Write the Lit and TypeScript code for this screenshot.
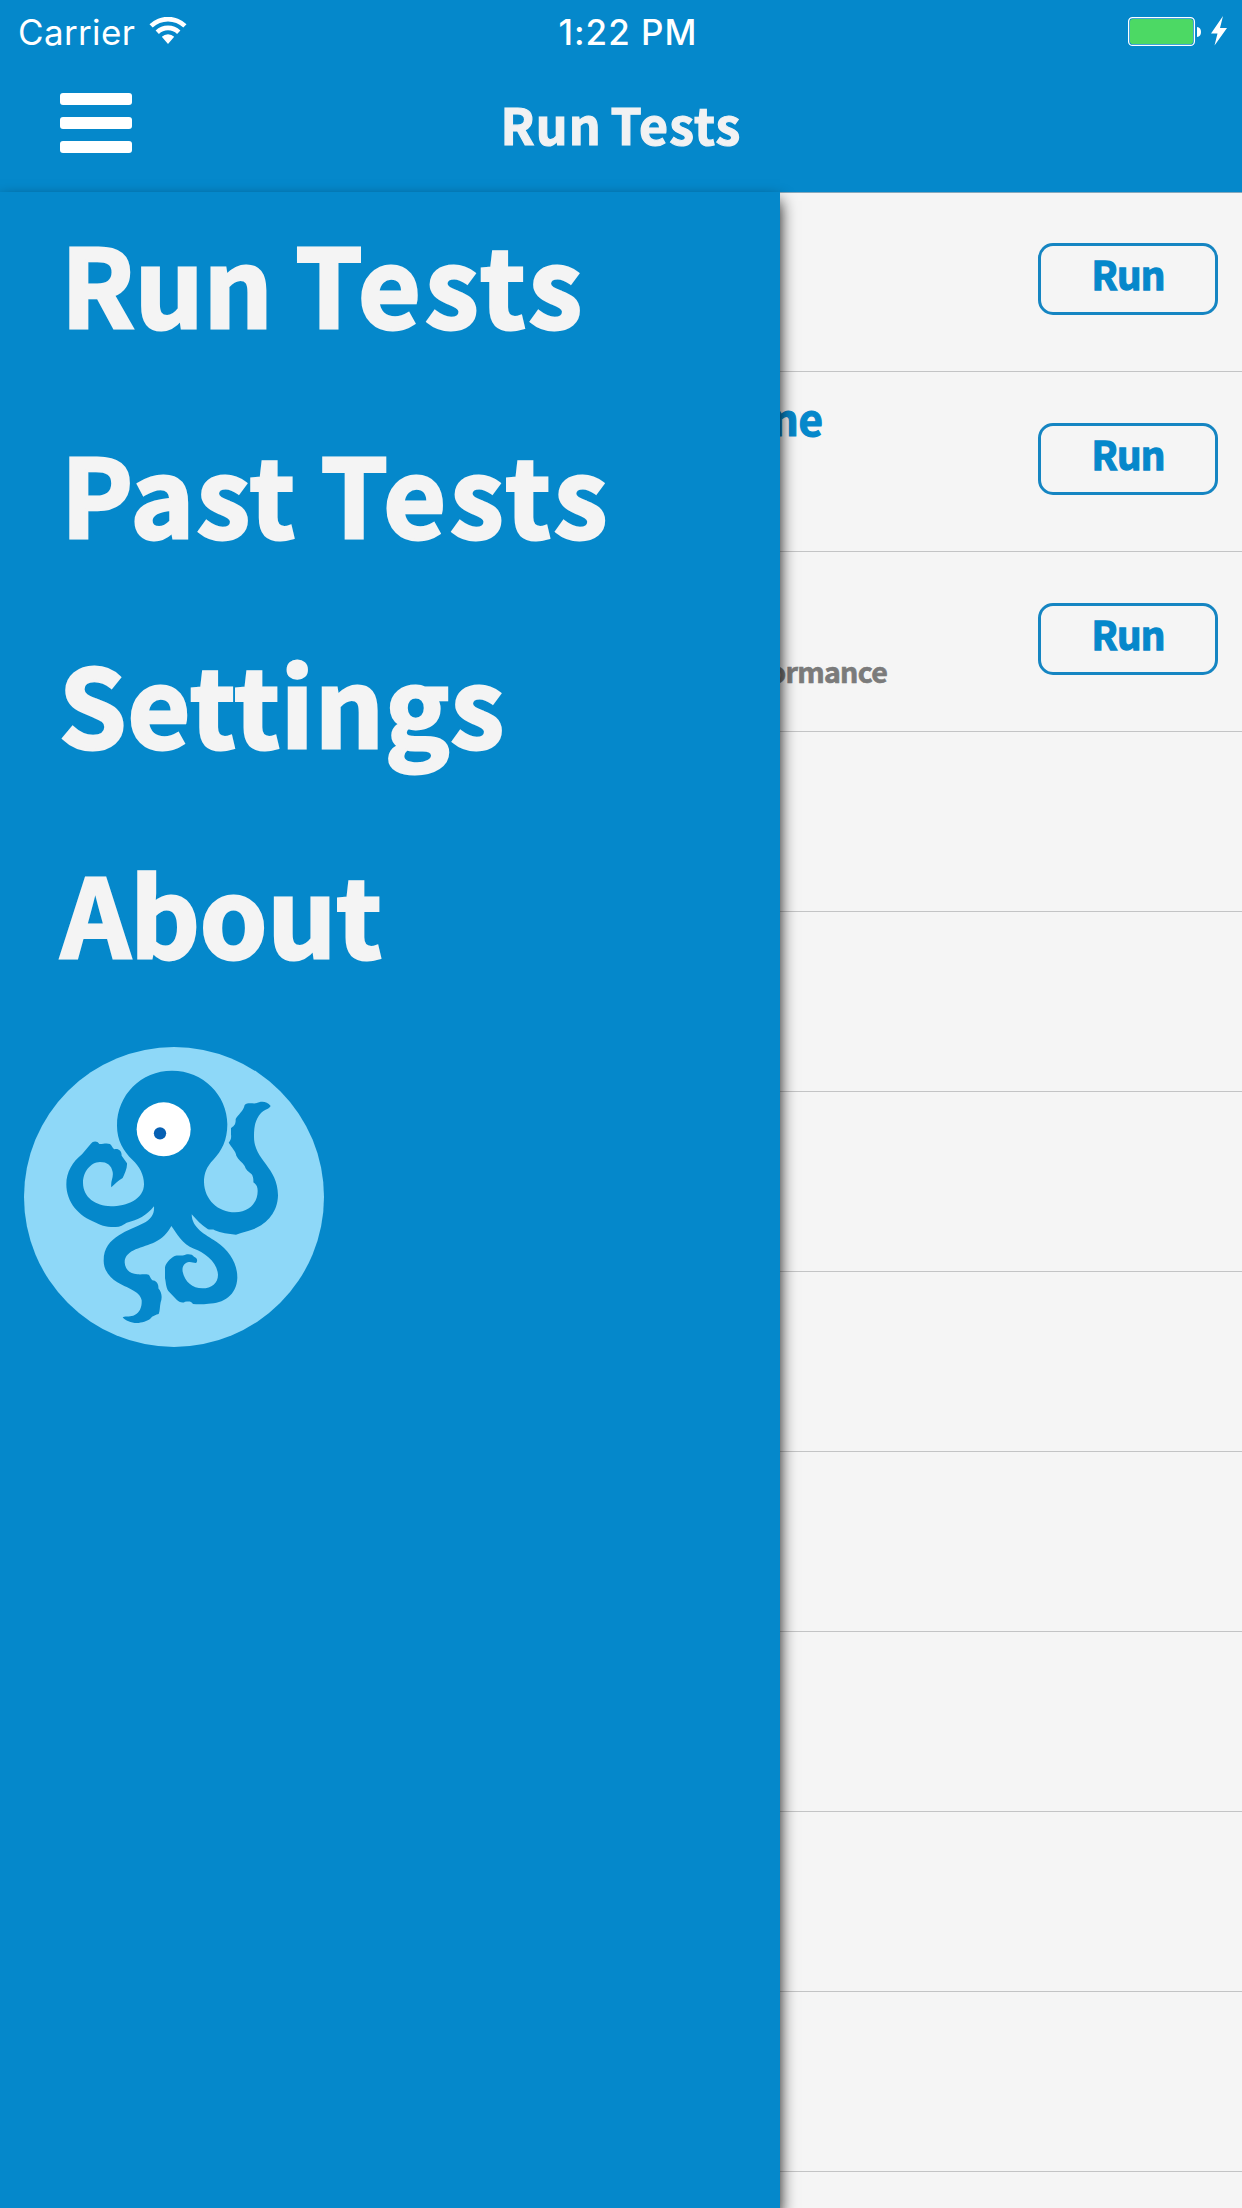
import { LitElement, html, css, svg } from "lit";
import { customElement } from "lit/decorators.js";

interface TestRow {
  title?: string;
  detail?: string;
  runnable?: boolean;
}

const MENU = [
  { first: "Run", firstClass: "run", second: "Tests" },
  { first: "Past", firstClass: "past", second: "Tests" },
  { first: "Settings", firstClass: "settings", second: "" },
  { first: "About", firstClass: "about", second: "" },
];

const ROWS: TestRow[] = [
  { runnable: true },
  { title: "ne", runnable: true },
  { detail: "ormance", runnable: true },
  ...Array.from({ length: 9 }, () => ({})),
];

@customElement("status-bar")
class StatusBar extends LitElement {
  static styles = css`
    :host {
      display: grid;
      grid-template-columns: 1fr auto 1fr;
      align-items: center;
      height: 60px;
      padding: 0 15px 0 18px;
      box-sizing: border-box;
      color: #fff;
      font: 400 35px/60px Inter, "Liberation Sans", sans-serif;
    }
    .left {
      display: flex;
      align-items: center;
    }
    .carrier {
      margin-top: 2px;
      letter-spacing: 0.35px;
    }
    .wifi {
      margin: 0 0 0 14px;
    }
    .time {
      margin: 2px 0 0 11px;
      font-weight: 500;
      letter-spacing: 1px;
    }
    .right {
      display: flex;
      justify-content: flex-end;
      align-items: center;
    }
    svg {
      display: block;
    }
  `;
  render() {
    return html`
      <div class="left">
        <span class="carrier">Carrier</span>
        <svg class="wifi" width="38" height="28" viewBox="0 0 38 28">
          <path
            d="M0.5 7.3A26.5 26.5 0 0 1 37.5 7.3L34.3 10.6A22 22 0 0 0 3.7 10.6ZM6.6 13.6A17.8 17.8 0 0 1 31.4 13.6L28.1 17A13 13 0 0 0 9.9 17ZM12.8 19.8A8.8 8.8 0 0 1 25.2 19.8L19 27Z"
            fill="#fff"
          />
        </svg>
      </div>
      <span class="time">1:22 PM</span>
      <div class="right">
        <svg width="99" height="32" viewBox="0 0 99 32">
          <rect x="0.6" y="2.6" width="65.8" height="27.8" rx="4" fill="none" stroke="#fff" stroke-width="1.3" />
          <rect x="2" y="4" width="63" height="25" rx="2.8" fill="#4cd964" />
          <path d="M69 12Q73 12.500 73 17Q73 21.500 69 22Z" fill="#fff" />
          <path d="M95 1L83 18.500H89.500L86.500 30.500L99 13H92Z" fill="#fff" />
        </svg>
      </div>
    `;
  }
}

@customElement("nav-bar")
class NavBar extends LitElement {
  static styles = css`
    :host {
      display: grid;
      grid-template-columns: 1fr auto 1fr;
      align-items: center;
      height: 132px;
      padding: 0 60px;
      box-sizing: border-box;
    }
    .burger {
      display: flex;
      flex-direction: column;
      gap: 12px;
      width: 72px;
      margin-bottom: 6px;
      padding: 0;
      border: 0;
      background: none;
    }
    .bar {
      height: 12px;
      border-radius: 3px;
      background: #fff;
    }
    .title {
      margin: 0 0 7px;
      color: #f1f2f3;
      font: 700 50px/80px "Noto Sans CJK SC", "Noto Sans", sans-serif;
      letter-spacing: 1.2px;
      word-spacing: -4px;
      -webkit-text-stroke: 1.2px #f1f2f3;
    }
  `;
  render() {
    return html`
      <button class="burger" aria-label="Menu">
        <span class="bar"></span><span class="bar"></span><span class="bar"></span>
      </button>
      <h1 class="title">Run Tests</h1>
    `;
  }
}

@customElement("octopus-logo")
class OctopusLogo extends LitElement {
  static styles = css`
    :host,
    svg {
      display: block;
    }
  `;
  render() {
    return html`
      <svg width="300" height="300" viewBox="42 50 900 900">
        <circle cx="492" cy="500" r="450" fill="#8ed8f8" />
        ${svg`<path fill="#0588cb" d="M486 121C580 121 652 195 652 282C652 330 635 362 610 388C590 408 582 430 582 455C583 508 624 546 675 546C720 545 743 515 743 482C743 470 740 463 730 456C731 448 729 437 725 432C715 424 706 417 704 407C697 395 684 388 679 376C677 362 664 350 656 337C664 328 664 320 663 312V293C670 288 678 284 677 266C685 252 700 243 704 224C712 216 725 220 738 219C752 212 770 211 782 227C775 238 762 238 753 248C735 268 732 290 732 320C732 390 804 410 804 495C803 545 772 580 730 597C712 604 695 607 678 613C655 611 633 608 614 600C609 596 602 599 594 597C573 584 560 568 545 552C546 594 585 612 619 634C658 661 682 698 682 742C680 795 640 819 595 820C580 822 565 822 549 821C542 810 534 814 525 814C518 820 506 814 500 808L475 782C467 770 468 755 465 744V711C468 697 480 685 494 677C505 674 515 678 526 673C536 670 548 672 552 679C562 682 564 692 558 698C548 698 544 693 533 696C520 700 516 712 518 724C524 754 548 774 577 774C605 774 624 758 624 733C621 693 584 667 552 655C516 642 498 606 484 587C473 608 456 625 434 636C402 652 344 657 344 696C345 718 360 730 382 732C394 733 404 731 416 733C420 736 421 744 427 750C438 750 447 762 445 774C456 786 457 803 452 816C449 830 450 842 446 851C437 852 433 857 426 859C417 872 401 874 386 878C368 880 346 872 338 861C350 856 362 861 374 854C390 846 396 829 395 810C390 782 350 773 322 756C297 740 281 718 281 691C281 652 300 632 328 614C349 600 375 592 400 579C422 568 434 552 432 528C410 555 384 570 350 577C340 583 327 592 313 590C285 590 269 583 258 577C205 558 169 515 169 462C169 425 188 394 216 372L242 341C249 331 262 331 268 341C276 343 287 336 300 341C307 347 307 354 313 357C325 354 335 361 335 376L351 399C352 415 344 429 338 443C325 450 315 460 304 471C301 452 311 443 308 425C304 405 292 395 270 395C241 396 219 425 219 458C220 502 256 526 303 528C350 527 402 508 402 461C402 432 388 408 367 388C340 362 321 330 321 286C321 194 393 121 486 121Z" />`}
        <circle cx="461" cy="297" r="81" fill="#fff" />
        <circle cx="450" cy="309" r="18.500" fill="#0560b3" />
      </svg>
    `;
  }
}

@customElement("side-drawer")
class SideDrawer extends LitElement {
  static styles = css`
    :host {
      display: flex;
      flex-direction: column;
      box-sizing: border-box;
      background: #0588cb;
      box-shadow: 0 9px 15px rgba(0, 0, 0, 0.95);
    }
    .menu {
      display: flex;
      flex-direction: column;
      gap: 32px;
      padding-left: 58px;
    }
    .item {
      height: 178px;
      color: #f4f4f4;
      font: 700 108px/178px "Noto Sans CJK SC", "Noto Sans", sans-serif;
      -webkit-text-stroke: 3px #f4f4f4;
      white-space: nowrap;
    }
    .run {
      margin-left: 3px;
      letter-spacing: 0;
      word-spacing: -2px;
    }
    .past {
      margin-left: 3px;
      letter-spacing: 2px;
      word-spacing: -3px;
    }
    .settings {
      margin-left: 1px;
      letter-spacing: 1.1px;
    }
    .about {
      margin-left: 3px;
      letter-spacing: 0;
    }
    .second {
      letter-spacing: 4.2px;
    }
    .logo {
      margin: 47px 0 0 24px;
    }
  `;
  render() {
    return html`
      <nav class="menu">
        ${MENU.map(
          (m) =>
            html`<div class="item"><span class=${m.firstClass}>${m.second ? m.first + " " : m.first}</span>${m.second
                ? html`<span class="second">${m.second}</span>`
                : ""}</div>`
        )}
      </nav>
      <octopus-logo class="logo"></octopus-logo>
    `;
  }
}

@customElement("test-row")
class TestRowElement extends LitElement {
  static properties = { row: { attribute: false } };
  declare row: TestRow;
  static styles = css`
    :host {
      display: flex;
      justify-content: space-between;
      height: 180px;
      padding-right: 24px;
      box-sizing: border-box;
      border-bottom: 1px solid #c3c4c5;
      font: 700 42px/60px "Noto Sans CJK SC", "Noto Sans", sans-serif;
    }
    .texts {
      display: flex;
      flex-direction: column;
      padding-top: 16px;
    }
    .title {
      height: 60px;
      color: #0588cb;
      width: 823px;
      text-align: right;
      -webkit-text-stroke: 1.2px #0588cb;
    }
    .detail {
      width: 887px;
      margin-top: 21px;
      color: #7b7b7b;
      font-size: 28.5px;
      line-height: 44px;
      letter-spacing: -0.7px;
      text-align: right;
      -webkit-text-stroke: 0.7px #7b7b7b;
    }
    .btn {
      display: flex;
      justify-content: center;
      width: 180px;
      height: 72px;
      margin-top: 51px;
      padding: 0;
      box-sizing: border-box;
      border: 3px solid #1585c2;
      border-radius: 15px;
      background: none;
      color: #0588cb;
      font: inherit;
      font-size: 38.5px;
      line-height: 54px;
      letter-spacing: -0.8px;
      -webkit-text-stroke: 1.3px #0588cb;
    }
    .label {
      height: 66px;
    }
  `;
  render() {
    const r = this.row;
    return html`
      <div class="texts">
        <div class="title">${r.title ?? ""}</div>
        ${r.detail ? html`<div class="detail">${r.detail}</div>` : ""}
      </div>
      ${r.runnable ? html`<button class="btn"><span class="label">Run</span></button>` : ""}
    `;
  }
}

@customElement("app-root")
class AppRoot extends LitElement {
  static styles = css`
    :host {
      display: flex;
      flex-direction: column;
      width: 1242px;
      height: 2208px;
      overflow: hidden;
      background: #f5f5f5;
    }
    .header {
      flex: none;
      height: 192px;
      background: #0588cb;
    }
    .body {
      position: relative;
      flex: 1;
      min-height: 0;
    }
    .list {
      height: 2016px;
      overflow: hidden;
      box-shadow: inset 0 1px #86a9bd;
    }
    .drawer {
      position: absolute;
      inset: 0 auto 0 0;
      width: 780px;
    }
  `;
  render() {
    return html`
      <header class="header">
        <status-bar></status-bar>
        <nav-bar></nav-bar>
      </header>
      <div class="body">
        <div class="list">${ROWS.map((row) => html`<test-row .row=${row}></test-row>`)}</div>
        <side-drawer class="drawer"></side-drawer>
      </div>
    `;
  }
}
